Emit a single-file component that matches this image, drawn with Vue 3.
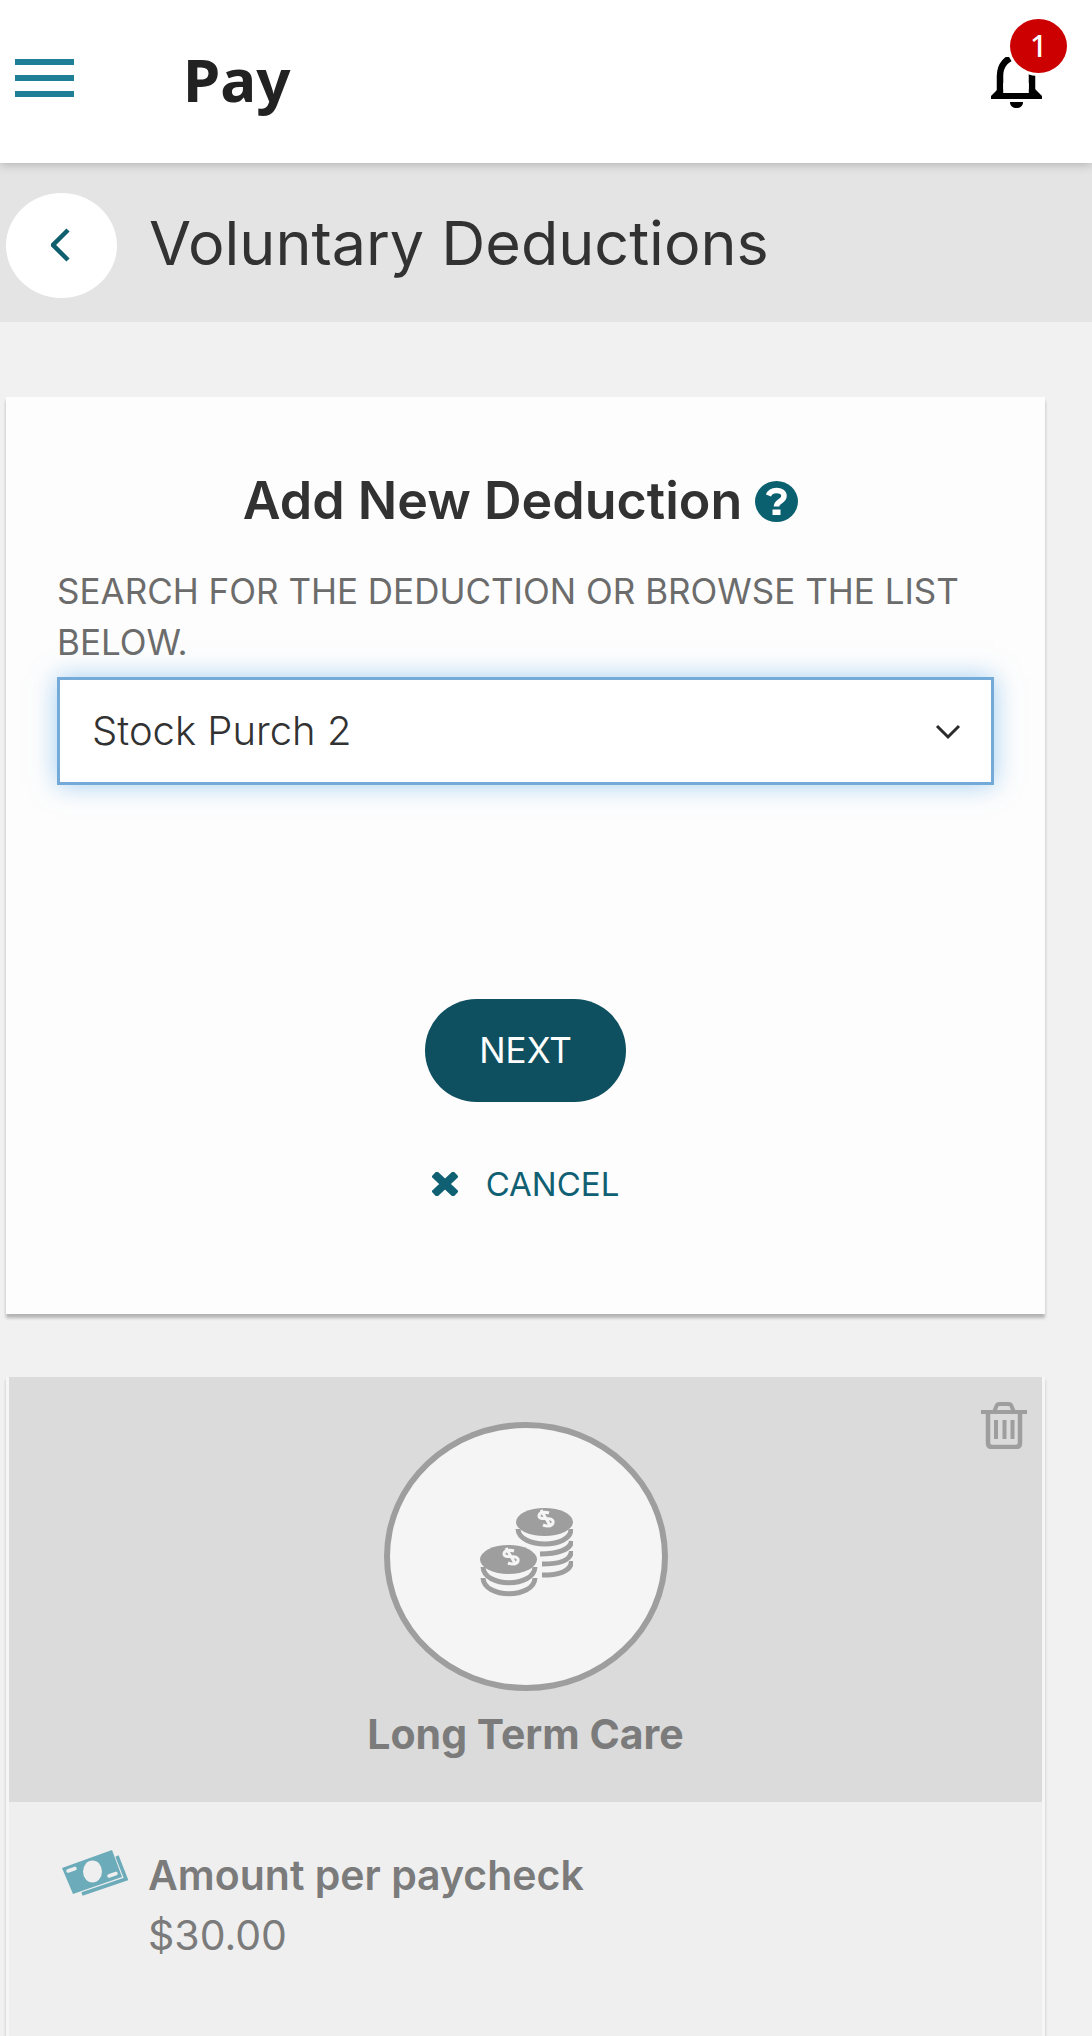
<script setup>
import { ref } from 'vue'

const selected = ref('Stock Purch 2')
const options = ['Stock Purch 1', 'Stock Purch 2', 'Long Term Care']
</script>

<template>
  <div class="page">
    <header class="topbar">
      <button class="menu" type="button" aria-label="Menu">
        <span></span><span></span><span></span>
      </button>
      <h1>Pay</h1>
      <button class="alerts" type="button" aria-label="Notifications">
        <svg class="bell" viewBox="0 0 51 52" aria-hidden="true">
          <path d="M9 39V19C9 8 16 0 25.500 0S41 8 41 19V39" fill="none" stroke="#000" stroke-width="6.500" />
          <path d="M0 42v-3l7-7h37l7 7v3z" fill="#000" />
          <path d="M12.200 26h25.600v10H12.200z" fill="#fff" />
          <path d="M19 45h13c0 4-3 6-6.500 6S19 49 19 45z" fill="#000" />
        </svg>
        <span class="badge">1</span>
      </button>
    </header>

    <div class="titlebar">
      <button class="back" type="button" aria-label="Back">
        <svg width="22" height="36" viewBox="0 0 22 36" aria-hidden="true">
          <path d="M17 2L2 17l15 15" fill="none" stroke="#0f5f6e" stroke-width="4.500" />
        </svg>
      </button>
      <h2>Voluntary Deductions</h2>
    </div>

    <main>
      <form class="card add" @submit.prevent>
        <div class="heading">
          <h3>Add New Deduction</h3>
          <button class="help" type="button" aria-label="Help">
            <svg width="43" height="41" viewBox="0 0 43 41" aria-hidden="true">
              <ellipse cx="21.500" cy="20.500" rx="21.500" ry="20.500" fill="#0b6070" />
              <path d="M13.500 14.500C15 10.500 18 9.500 21.500 9.500c4.500 0 7.500 2.200 7.500 5.500 0 5.500-7.500 5-7.500 10.500" fill="none" stroke="#fff" stroke-width="5.500" />
              <path d="M17.500 28.500h8v5.500h-8z" fill="#fff" />
            </svg>
          </button>
        </div>
        <label for="deduction">SEARCH FOR THE DEDUCTION OR BROWSE THE LIST BELOW.</label>
        <div class="select">
          <select id="deduction" v-model="selected">
            <option v-for="o in options" :key="o">{{ o }}</option>
          </select>
          <svg width="28" height="18" viewBox="0 0 28 18" aria-hidden="true">
            <path d="M3 3l11 11L25 3" fill="none" stroke="#2b2b2b" stroke-width="3" />
          </svg>
        </div>
        <button class="next" type="submit">NEXT</button>
        <button class="cancel" type="button">
          <svg width="26" height="24" viewBox="0 0 26 24" aria-hidden="true">
            <path d="M5 4.500l16 15M21 4.500l-16 15" stroke="#0f6072" stroke-width="8" stroke-linecap="square" stroke-linejoin="round" />
          </svg>
          <span>CANCEL</span>
        </button>
      </form>

      <section class="card plan">
        <div class="summary">
          <button class="trash" type="button" aria-label="Delete">
            <svg width="46" height="47" viewBox="0 0 46 47" fill="none" stroke="#9e9e9e" aria-hidden="true">
              <path d="M0 10h46" stroke-width="4" />
              <path d="M13.500 9l2-5c.5-1.500 1.500-2 3-2h9c1.500 0 2.500.5 3 2l2 5" stroke-width="4" />
              <path d="M7 10v31c0 2.500 1.500 4 4 4h24c2.500 0 4-1.500 4-4V10" stroke-width="4.500" />
              <path d="M15 18v19M23.500 18v19M31.500 18v19" stroke-width="4" />
            </svg>
          </button>
          <div class="medal">
            <svg width="94" height="98" viewBox="-1 0 94 98" aria-hidden="true">
              <g fill="none" stroke="#9e9e9e" stroke-width="5">
                <path d="M38 21C39 41 91 41 91 21" />
                <path d="M60 46C76 46 91 42 91.500 33" />
                <path d="M62 56C78 56 91 53 91.500 43" />
                <path d="M62 67C78 67 91 64 91.500 53" />
                <path d="M3 59C4 80 54 80 55 59" />
                <path d="M3 70C4 91 54 91 55 70" />
              </g>
              <ellipse cx="64.500" cy="14" rx="28.500" ry="14" fill="#9e9e9e" />
              <ellipse cx="28.500" cy="51.500" rx="28.500" ry="14.500" fill="#9e9e9e" />
              <g fill="none" stroke="#f5f5f5" stroke-width="3">
                <path id="sign" d="M69 5c-4-1.500-10-1-10 3 0 5 12 0 14 5 1 5-5 6-10 4M61 2l10 17" />
                <use href="#sign" x="-35" y="38" />
              </g>
            </svg>
          </div>
          <h3>Long Term Care</h3>
        </div>
        <div class="amount">
          <svg width="66" height="46" viewBox="0 0 66 46" aria-hidden="true">
            <path d="M0 18L50 0l10 27-49 17z" fill="#6cabb9" />
            <path d="M55 6l9 23-44 15" fill="none" stroke="#6cabb9" stroke-width="3.500" />
            <ellipse cx="30.500" cy="21.500" rx="9.500" ry="11" fill="#efefef" />
            <path d="M6 21l7-2.500M47 26l7-2.500" stroke="#efefef" stroke-width="3.500" stroke-linecap="round" />
          </svg>
          <dl>
            <dt>Amount per paycheck</dt>
            <dd>$30.00</dd>
          </dl>
        </div>
      </section>
    </main>
  </div>
</template>

<style>
body {
  margin: 0;
  background: #f1f1f1;
}
</style>

<style scoped>
.page {
  display: flex;
  flex-direction: column;
  min-height: 100vh;
  box-sizing: border-box;
  font-family: Inter, "Open Sans", sans-serif;
  color: #323232;
}
h1, h2, h3, dl, dd {
  margin: 0;
}
button {
  padding: 0;
  border: 0;
  background: none;
  font: inherit;
  color: inherit;
  cursor: pointer;
}
svg {
  display: block;
}
.topbar {
  display: flex;
  align-items: center;
  height: 163px;
  box-sizing: border-box;
  padding: 0 50px 8px 15px;
  background: #fff;
  box-shadow: 0 1px 10px rgba(0, 0, 0, 0.25);
  position: relative;
}
.menu {
  display: flex;
  flex-direction: column;
  gap: 10px;
  width: 59px;
}
.menu span {
  height: 6px;
  background: #1f7f96;
}
h1 {
  margin: 2px 0 0 109px;
  font: 700 60px/80px "Noto Sans", sans-serif;
  color: #222;
}
.alerts {
  position: relative;
  margin: 10px 0 0 auto;
}
.bell {
  width: 51px;
  height: 52px;
}
.badge {
  position: absolute;
  left: 19px;
  bottom: 36px;
  width: 57px;
  height: 54px;
  border-radius: 50%;
  background: #c00;
  box-shadow: 0 0 0 3px #fff;
  font: 500 30px/54px "Noto Sans", sans-serif;
  color: #fff;
}
.titlebar {
  display: flex;
  align-items: center;
  gap: 32px;
  height: 159px;
  box-sizing: border-box;
  padding: 6px 0 0 6px;
  background: #e4e4e4;
}
.back {
  display: flex;
  align-items: center;
  justify-content: center;
  width: 111px;
  height: 105px;
  border-radius: 50%;
  background: #fff;
}
.titlebar h2 {
  padding-bottom: 6px;
  font-weight: 400;
  font-size: 61px;
  line-height: 72px;
}
main {
  flex: 1;
  display: flex;
  flex-direction: column;
  gap: 63px;
  padding: 75px 47px 0 6px;
}
.add {
  display: flex;
  flex-direction: column;
  align-items: center;
  padding: 74px 51px 110px;
  background: #fdfdfd;
  box-shadow: 0 4px 3px rgba(0, 0, 0, 0.25);
}
.heading {
  display: flex;
  align-items: center;
  gap: 13px;
  padding-right: 10px;
}
.heading h3 {
  font-weight: 600;
  font-size: 52px;
  line-height: 60px;
}
label {
  align-self: stretch;
  margin: 35px 0 9px;
  font-size: 35px;
  line-height: 51px;
  color: #6c6c6c;
}
.select {
  position: relative;
  align-self: stretch;
}
select {
  display: block;
  width: 100%;
  height: 108px;
  padding: 0 32px;
  border: 3px solid #74aad8;
  border-radius: 0;
  appearance: none;
  background: #fff;
  box-shadow: 0 0 24px rgba(102, 175, 233, 0.6);
  outline: none;
  font: 300 40px/48px Inter, sans-serif;
  color: #323232;
}
.select svg {
  position: absolute;
  right: 32px;
  top: 46px;
  pointer-events: none;
}
.next {
  width: 201px;
  height: 103px;
  margin-top: 214px;
  border-radius: 52px;
  background: #0f5060;
  font-size: 35px;
  line-height: 51px;
  color: #fff;
}
.cancel {
  display: flex;
  align-items: center;
  gap: 28px;
  margin-top: 62px;
  font-size: 33px;
  line-height: 40px;
  color: #0f6072;
}
.plan {
  flex: 1;
  display: flex;
  flex-direction: column;
  padding: 0 3px;
  background: #f6f6f6;
  box-shadow: 0 3px 3px rgba(0, 0, 0, 0.2);
}
.summary {
  position: relative;
  display: flex;
  flex-direction: column;
  align-items: center;
  padding: 45px 0 44px;
  background: #dbdbdb;
}
.trash {
  position: absolute;
  top: 25px;
  right: 15px;
}
.medal {
  display: flex;
  align-items: center;
  justify-content: center;
  width: 284px;
  height: 269px;
  box-sizing: border-box;
  border: 6px solid #9e9e9e;
  border-radius: 50%;
  background: #f5f5f5;
}
.summary h3 {
  margin-top: 19px;
  font-weight: 700;
  font-size: 41px;
  line-height: 48px;
  color: #7b7b7b;
}
.amount {
  flex: 1;
  display: flex;
  align-items: flex-start;
  gap: 20px;
  padding: 43px 53px 0;
  background: #efefef;
  color: #7b7b7b;
  font-size: 41px;
  line-height: 60px;
}
.amount svg {
  margin-top: 5px;
}
dt {
  font-weight: 600;
}
</style>
